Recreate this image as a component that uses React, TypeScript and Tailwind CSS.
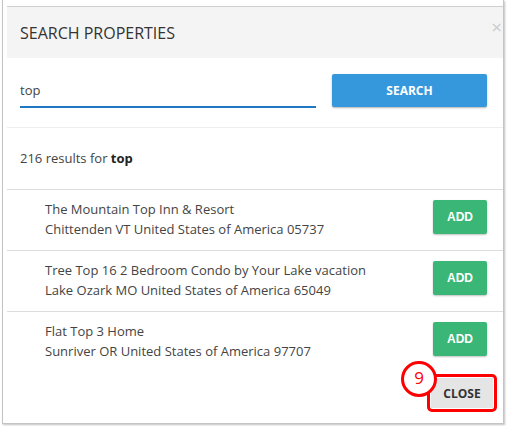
import React from "react";

const rows = [
  { name: "The Mountain Top Inn & Resort", addr: "Chittenden VT United States of America 05737" },
  { name: "Tree Top 16 2 Bedroom Condo by Your Lake vacation", addr: "Lake Ozark MO United States of America 65049" },
  { name: "Flat Top 3 Home", addr: "Sunriver OR United States of America 97707" },
];

export default function App() {
  return (
    <div className="w-[510px] h-[426px] bg-white overflow-hidden" style={{ fontFamily: '"Open Sans", "Liberation Sans", sans-serif' }}>
      <div className="ml-[2px] w-[502px] h-[424px] border-x border-b border-[#c4c4c4] shadow-[1px_1px_2px_rgba(0,0,0,0.25)] flex flex-col">
        <div className="mt-[6px] ml-[4px] h-[52px] border-t border-[#cfcfcf] bg-[#f4f4f4] flex items-start justify-between">
          <div className="pl-[13px] h-[51px] flex items-center text-[16px] text-[#333]">SEARCH PROPERTIES</div>
          <div className="pt-[9px] pr-[1px] text-[19px] leading-[22px] text-[#cccccc]">×</div>
        </div>
        <div className="mt-[16px] pl-[17px] pr-[16px] flex items-start justify-between">
          <div className="w-[296px] h-[34px] border-b-[2px] border-[#1f78c1] flex items-center text-[13px] text-[#444] pt-[1px]">top</div>
          <div className="w-[155px] h-[33px] rounded-[2px] bg-[#3698dc] shadow-[0_1px_2px_rgba(0,0,0,0.3)] flex items-center justify-center text-white text-[12px] font-bold">SEARCH</div>
        </div>
        <div className="mt-[19px] ml-[4px] border-t border-[#eeeeee]"></div>
        <div className="h-[61px] pl-[17px] flex items-center text-[13px] text-[#444]">
          <span>216 results for&nbsp;</span><span className="font-bold text-[#222]">top</span>
        </div>
        {rows.map((r, i) => (
          <div key={i} className="ml-[4px] border-t border-[#dddddd] h-[61px] flex items-start justify-between pr-[16px]">
            <div className="pl-[38px] pt-[9px] text-[13px] leading-[20px] text-[#444]">
              <div>{r.name}</div>
              <div>{r.addr}</div>
            </div>
            <div className="mt-[10px] w-[54px] h-[34px] rounded-[2px] bg-[#3ab676] shadow-[0_1px_2px_rgba(0,0,0,0.25)] flex items-center justify-center text-white text-[12px] font-bold" style={{ fontFamily: '"Liberation Sans", Arial, sans-serif' }}>ADD</div>
          </div>
        ))}
        <div className="flex justify-end pr-[6px] mt-[2px]">
          <div className="relative">
            <div className="w-[70px] h-[38px] border-[3px] border-[#ff0000] rounded-[5px] p-[1px]">
              <div className="w-full h-full bg-[#e5e5e5] flex items-center justify-center text-[12px] font-bold text-[#333] pt-[2px]">CLOSE</div>
            </div>
            <div className="absolute left-[-26px] top-[-13px] w-[36px] h-[36px] rounded-full border-[3px] border-[#ff0000] bg-white flex items-center justify-center text-[17px] font-medium text-[#ff0000] leading-none pb-[4px]">9</div>
          </div>
        </div>
      </div>
    </div>
  );
}
